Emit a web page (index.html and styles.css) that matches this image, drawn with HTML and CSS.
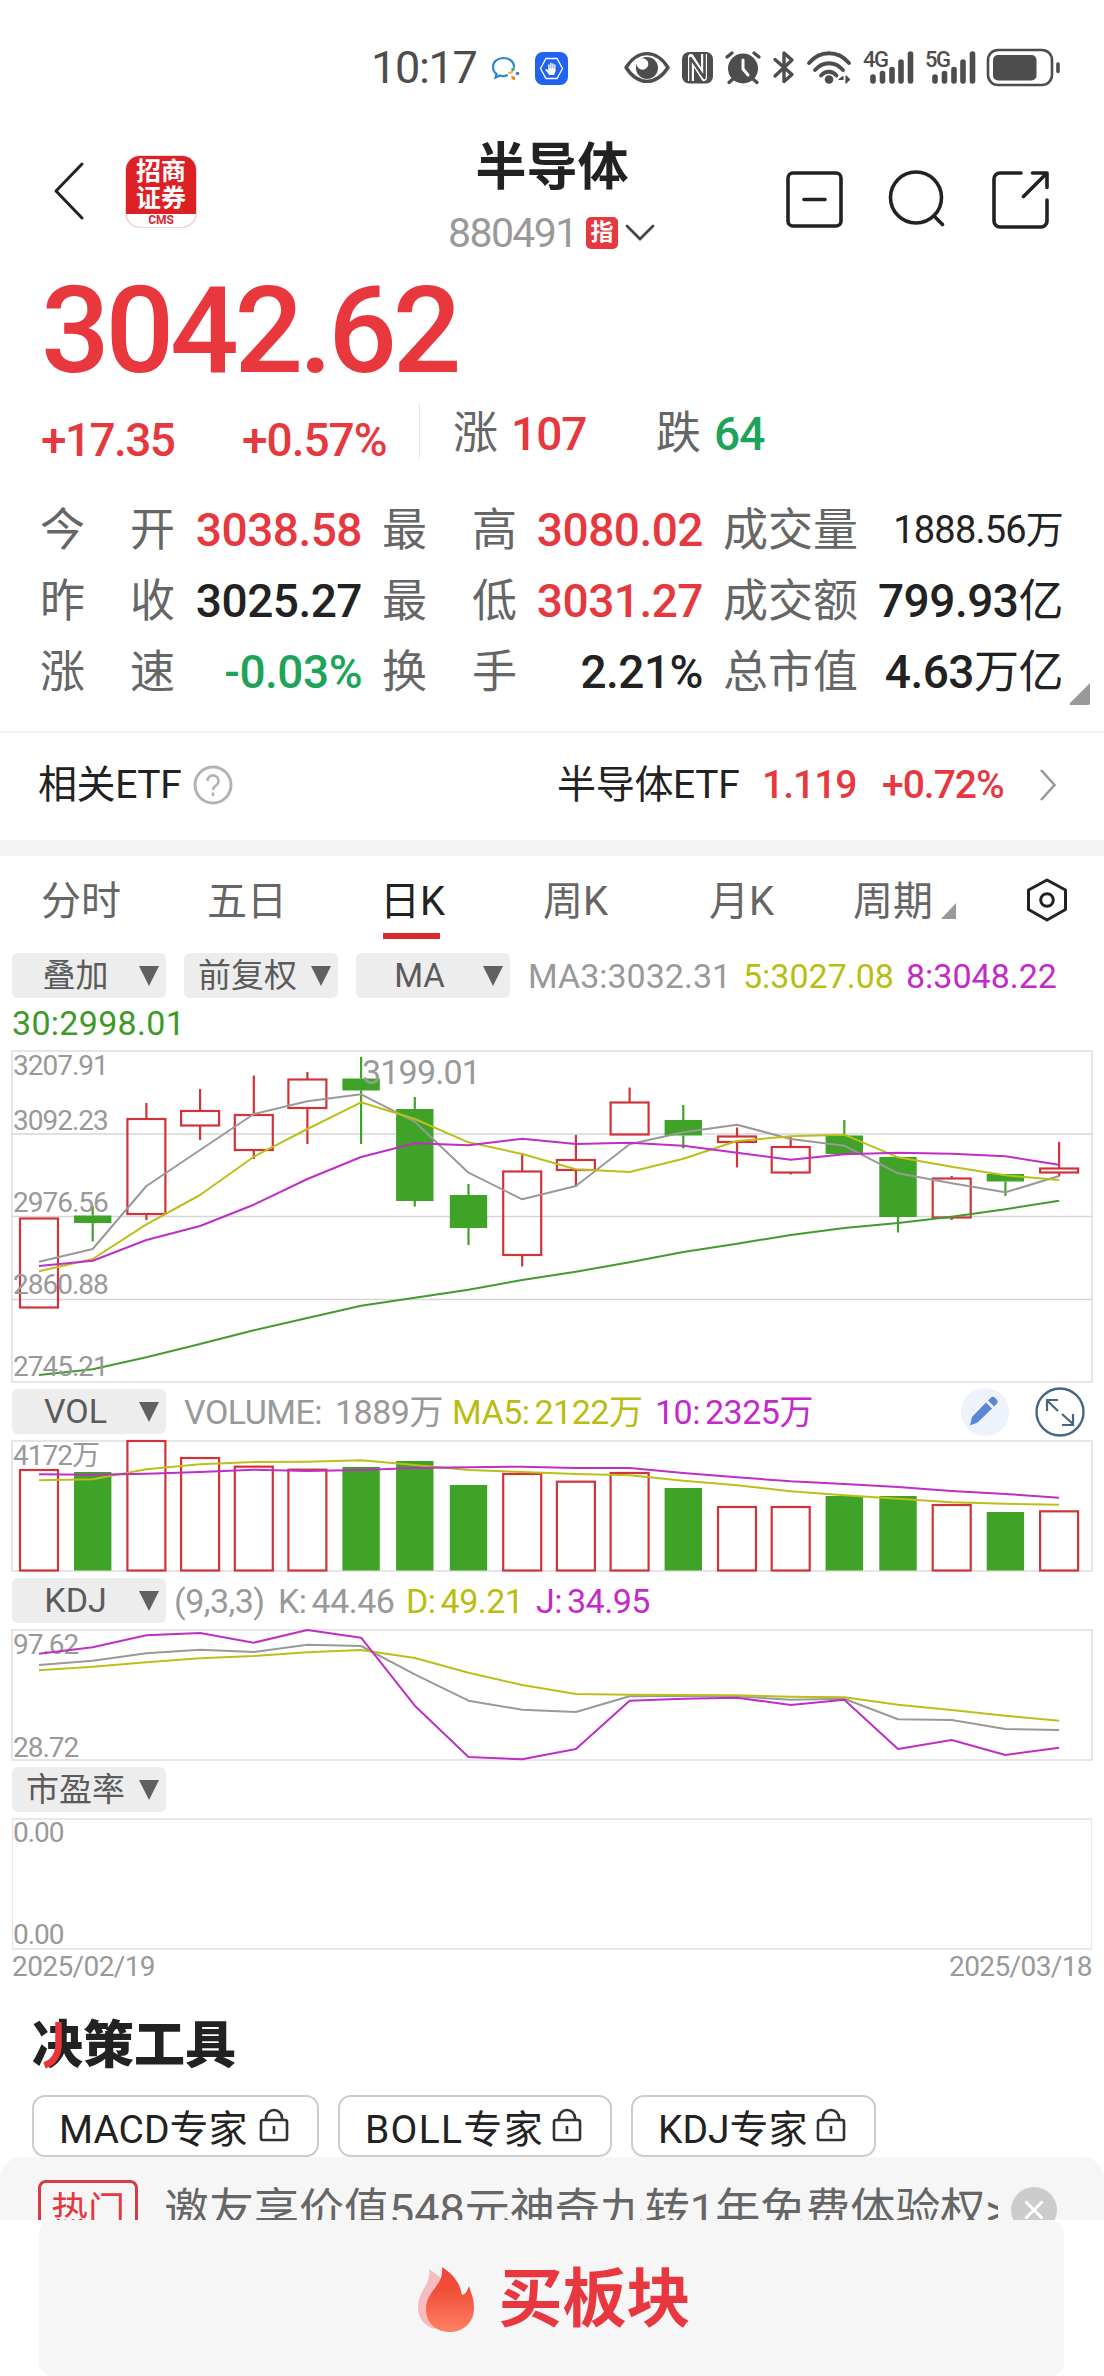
FILE: index.html
```html
<!DOCTYPE html>
<html lang="zh-CN">
<head>
<meta charset="utf-8">
<title>半导体 880491</title>
<link rel="stylesheet" href="styles.css">
</head>
<body>
<div class="status">
  <span class="clock">10:17</span>
  <svg class="st-chat" width="30" height="26" viewBox="0 0 30 26" fill="none" stroke-width="2.2" stroke-linecap="round">
    <path d="M23 11C23 5.500 18 2 12.500 2S2 5.500 2 11c0 3 1.500 5.500 3.500 7L4.500 21.500 9 19.500c2 .7 5 .7 7-.2" stroke="#2a86c8"/>
    <path d="M18 17l3 -1M21 21l2 2" stroke="#f0b040"/><circle cx="22" cy="13.500" r="1.800" fill="#3fae5a"/><circle cx="26.500" cy="17.500" r="1.800" fill="#3a7fd0"/><circle cx="22.500" cy="22" r="1.700" fill="#ee7a30"/>
  </svg>
  <svg class="st-app" width="33" height="33" viewBox="0 0 33 33">
    <rect width="33" height="33" rx="8" fill="#2163ee"/>
    <path d="M11 6.500h11l5.500 10-5.500 10H11l-5.500-10z" fill="none" stroke="#fff" stroke-width="1.300"/>
    <path d="M13.200 12.500v6l-2-1.700-.9.900 3.800 5.300h5l1.400-3.500v-7h-1.300v4h-.6v-5h-1.400v5h-.6v-5.700h-1.400v5.700h-.6v-4z" fill="#fff"/>
  </svg>
  <svg class="st-icons" width="440" height="40" viewBox="620 48 440 40" fill="none" stroke="#4d4d4d" stroke-width="3.400" stroke-linecap="round" stroke-linejoin="round">
    <path d="M626 67.500C638 49 656 49 668 67.500 656 86 638 86 626 67.500z"/>
    <circle cx="647" cy="68" r="11" fill="#4d4d4d" stroke="none"/><circle cx="642.500" cy="64" r="5.800" fill="#fff" stroke="none"/>
    <rect x="682" y="52" width="31" height="31.500" rx="7" fill="#4d4d4d" stroke="none"/>
    <path d="M691 81V57l13 21V54" stroke="#fff" stroke-width="6" stroke-linecap="butt"/>
    <path d="M690.500 82V58l14 20V54" stroke-width="2.600" stroke-linecap="butt"/>
    <circle cx="743" cy="68.500" r="15" fill="#4d4d4d" stroke="none"/><path d="M743 60v9l5 6" stroke="#fff" stroke-width="3"/><path d="M727 57l5-4M759 57l-5-4M733 79l-4 3.500M753 79l4 3.500"/>
    <path d="M775 59.500l17 15-8 7V53l8 7-17 16" stroke-width="3.400"/>
    <path d="M809 63c11-13 29-13 40 0M815 70c8-9 20-9 28 0M821 75.500c4.500-5 11-5 15.500 0" stroke-width="3.800"/><circle cx="829" cy="79.500" r="4.300" fill="#4d4d4d" stroke="none"/><path d="M839 79.500h4v-3zM846 76v7l3.500-3.500z" stroke-width="1.200" fill="#4d4d4d"/>
    <path d="M873 77v4M882.500 73.500V81M892 69.500V81M901 62V81M910.500 54V81M935 77v4M944.500 73.500V81M954 69.500V81M963 62V81M972.500 54V81" stroke-width="5.600"/>
    <rect x="988" y="50" width="64" height="35" rx="10" stroke-width="2.600"/><rect x="993" y="55" width="43.500" height="25.500" rx="5" fill="#4d4d4d" stroke="none"/><path d="M1058 64v7.500" stroke-width="3.600"/>
    <text class="st-net" x="863" y="67">4G</text><text class="st-net" x="925" y="67">5G</text>
  </svg>
</div>

<header class="head">
  <svg class="back" width="34" height="62" viewBox="0 0 34 62" fill="none" stroke="#222" stroke-width="3" stroke-linecap="round" stroke-linejoin="round"><path d="M29 4L3 31l26 27"/></svg>
  <div class="logo"><div class="logo-main">招商<br>证券</div><div class="logo-sub">CMS</div></div>
  <div class="title">
    <h1>半导体</h1>
    <div class="code"><span>880491</span><b>指</b><svg width="32" height="20" viewBox="0 0 32 20" fill="none" stroke="#444" stroke-width="2.800" stroke-linecap="round"><path d="M3 3l13 13L29 3"/></svg></div>
  </div>
  <svg class="acts" width="270" height="64" viewBox="782 168 270 64" fill="none" stroke="#222" stroke-width="3.600" stroke-linecap="round" stroke-linejoin="round">
    <rect x="788" y="173" width="53" height="53" rx="5"/><path d="M804 199.500h21"/>
    <circle cx="916" cy="197.500" r="25.500"/><path d="M935 217l7.500 7.500"/>
    <path d="M1021 173h-21a6 6 0 0 0-6 6v42a6 6 0 0 0 6 6h41a6 6 0 0 0 6-6v-21M1032.500 173H1047v14.500M1046 174l-22.500 22.500"/>
  </svg>
</header>

<section class="quote">
  <div class="price">3042.62</div>
  <div class="chg">
    <span class="up c1">+17.35</span><span class="up c2">+0.57%</span><i></i>
    <div class="cnt"><span>涨</span><b class="up">107</b><span class="fall">跌</span><b class="down">64</b></div>
  </div>
  <div class="stats">
    <span class="k"><i>今</i><i>开</i></span><span class="v up">3038.58</span><span class="k"><i>最</i><i>高</i></span><span class="v up">3080.02</span><span class="k">成交量</span><span class="v small">1888.56万</span>
    <span class="k"><i>昨</i><i>收</i></span><span class="v">3025.27</span><span class="k"><i>最</i><i>低</i></span><span class="v up">3031.27</span><span class="k">成交额</span><span class="v">799.93<i>亿</i></span>
    <span class="k"><i>涨</i><i>速</i></span><span class="v down">-0.03%</span><span class="k"><i>换</i><i>手</i></span><span class="v">2.21%</span><span class="k">总市值</span><span class="v">4.63<i>万亿</i></span>
  </div>
  <svg class="corner" width="22" height="23" viewBox="0 0 22 23"><path d="M21 0v20q0 2-2 2H2q-2 0-1-2z" fill="#999"/></svg>
</section>

<section class="etf">
  <span>相关ETF</span>
  <svg width="40" height="40" viewBox="0 0 40 40" fill="none" stroke="#b3b3b3" stroke-width="3"><circle cx="20" cy="20" r="18"/><path d="M14.500 16a5.500 5.500 0 1 1 8.500 4.500c-2 1.300-3 2-3 4.500M20 27.500v3.500" stroke-width="2.600"/></svg>
  <span class="etf-name">半导体ETF</span><b class="up e1">1.119</b><b class="up e2">+0.72%</b>
  <svg class="more" width="18" height="34" viewBox="0 0 18 34" fill="none" stroke="#999" stroke-width="2.600"><path d="M2 2l13.500 15L2 32"/></svg>
</section>

<nav class="tabs">
  <span>分时</span><span>五日</span><span class="on">日K</span><span>周K</span><span>月K</span><span>周期<svg width="15" height="16" viewBox="0 0 15 16"><path d="M15 0v16H0z" fill="#999"/></svg></span>
  <svg class="hex" width="44" height="46" viewBox="0 0 44 46" fill="none" stroke="#222" stroke-width="3" stroke-linejoin="round"><path d="M22 3l18.500 10v19.500L22 43 3.500 32.500V13z"/><circle cx="22" cy="23" r="6.300"/></svg>
</nav>

<section class="charts">
  <div class="row first">
    <div class="chip"><span>叠加</span></div><div class="chip"><span>前复权</span></div><div class="chip"><span>MA</span></div>
    <span class="gray w216">MA3:3032.31</span><span class="yel w162">5:3027.08</span><span class="mag">8:3048.22</span>
  </div>
  <div class="ma30">30:2998.01</div>
  <svg class="plot" id="kline" width="1104" height="336" viewBox="0 1048 1104 336">
    <path class="frame" d="M12 1051h1080v331H12z"/>
    <path class="grid" d="M12 1134h1080M12 1216.500h1080M12 1299.500h1080"/>
    <g class="marks"></g>
    <text x="13" y="1075">3207.91</text><text x="13" y="1130">3092.23</text><text x="13" y="1212">2976.56</text><text x="13" y="1294">2860.88</text><text x="13" y="1376">2745.21</text>
    <text class="peak" x="362" y="1084">3199.01</text>
  </svg>
  <div class="row vol">
    <div class="chip"><span>VOL</span></div>
    <span class="gray w151">VOLUME:</span><span class="gray w117">1889万</span><span class="yel w203">MA5:<em></em>2122万</span><span class="mag">10:<em></em>2325万</span>
    <svg class="tools" width="128" height="50" viewBox="958 1386 128 50" fill="none">
      <circle cx="985" cy="1411" r="24" fill="#eef2fb"/>
      <path d="M972 1416l14-14.500 6 6-14.500 14-7.500 3zM988 1399.500l3-3q2-1.500 4 .3l2 2q1.500 2 0 3.700l-3 3z" fill="#5b86d2"/>
      <circle cx="1060" cy="1411" r="23.500" stroke="#4a6580" stroke-width="2.400"/>
      <path d="M1058 1410l-11-10.500M1047 1410v-11h11M1062 1413l11 10M1073 1413v11h-11" stroke="#4a6580" stroke-width="2.200"/>
    </svg>
  </div>
  <svg class="plot" id="volume" width="1104" height="134" viewBox="0 1439 1104 134">
    <path class="frame" d="M12 1441h1080v130H12z"/>
    <g class="marks"></g>
    <text x="13" y="1465">4172万</text>
  </svg>
  <div class="row kdj">
    <div class="chip"><span>KDJ</span></div>
    <span class="gray w106">(9,3,3)</span><span class="gray w127">K:<em></em>44.46</span><span class="yel w129">D:<em></em>49.21</span><span class="mag">J:<em></em>34.95</span>
  </div>
  <svg class="plot" id="kdj" width="1104" height="134" viewBox="0 1628 1104 134">
    <path class="frame" d="M12 1630h1080v130H12z"/>
    <text x="13" y="1654">97.62</text><text x="13" y="1757">28.72</text>
    <g class="marks"></g>
  </svg>
  <div class="row pe"><div class="chip"><span>市盈率</span></div></div>
  <div class="empty"><span>0.00</span><span>0.00</span></div>
  <div class="dates"><span>2025/02/19</span><span>2025/03/18</span></div>
</section>

<section class="tools-sec">
  <h2>决策工具<svg width="34" height="52" viewBox="0 0 34 52" fill="none" stroke="#e8353c" stroke-width="6.500"><path d="M26.500 2v24q-1 15-14 19.500"/></svg></h2>
  <div class="experts">
    <div class="macd">MACD专家<svg class="lock" width="30" height="34" viewBox="0 0 30 34"><use href="#lock"/></svg></div>
    <div class="boll">BOLL专家<svg class="lock" width="30" height="34" viewBox="0 0 30 34"><use href="#lock"/></svg></div>
    <div class="kdjx">KDJ专家<svg class="lock" width="30" height="34" viewBox="0 0 30 34"><use href="#lock"/></svg></div>
  </div>
</section>
<svg width="0" height="0" class="defs"><defs><g id="lock" fill="none" stroke="#333" stroke-width="2.600"><rect x="2" y="12" width="26" height="20" rx="2"/><path d="M7 12v-2a8 8 0 0 1 16 0v2M15 18v8"/></g></defs></svg>

<div class="banner">
  <span class="hot">热门</span>
  <p>邀友享价值548元神奇九转1年免费体验权&gt;&gt;</p>
  <svg width="46" height="46" viewBox="0 0 46 46"><circle cx="23" cy="23" r="23" fill="#ccc"/><path d="M14.500 14.500l17 17M31.500 14.500l-17 17" stroke="#fff" stroke-width="3"/></svg>
</div>
<footer class="buy">
  <svg width="58" height="68" viewBox="0 0 58 68">
    <defs><linearGradient id="fire" x1="0" y1="0" x2="0" y2="1"><stop offset="0" stop-color="#f0443a"/><stop offset=".35" stop-color="#f04e38"/><stop offset="1" stop-color="#ff8266"/></linearGradient></defs>
    <path d="M12 3c3 14-11 22-11 38 0 11 6 19 17 22L34 20C28 16 20 8 12 3z" fill="#f7bcc0"/>
    <path d="M25 1c2 20-16 23-16 42 0 14 10 23 24 23s24-10 24-24c0-10-3-15-5-22-2 5-3 8-7 9C43 17 36 8 25 1z" fill="url(#fire)"/>
  </svg>
  <b>买板块</b>
</footer>
<script src="chart.js"></script>
</body>
</html>
```
FILE: styles.css
```css
* { box-sizing: border-box; }
body { margin: 0; width: 1104px; height: 2376px; overflow: hidden; background: #fff; color: #222; font-family: Roboto, "Noto Sans CJK SC", sans-serif; }
h1, h2, p { margin: 0; }
i { font-style: normal; }
svg { display: block; flex: none; }
.defs { position: absolute; }
.up { color: #e5383f; }
.down { color: #1ea35b; }
.gray { color: #999; }
.yel { color: #b9bd12; }
.mag { color: #c429c9; }

.status { height: 136px; display: flex; align-items: center; padding-left: 371px; color: #4d4d4d; }
.clock { font-size: 45px; line-height: 50px; width: 120px; letter-spacing: -1.300px; white-space: nowrap; }
.st-chat { margin-top: 2px; }
.st-app { margin-left: 14px; }
.st-icons { margin-left: 52px; }
.st-net { font: 500 22px Roboto, sans-serif; fill: #4d4d4d; stroke: none; letter-spacing: -1.500px; }

.head { height: 133px; display: flex; align-items: flex-start; padding-left: 53px; }
.back { margin-top: 24px; }
.logo { margin: 20px 0 0 39px; width: 70px; height: 71px; border-radius: 14px; overflow: hidden; background: #dc2024; box-shadow: 0 0 0 1px #ead9d9; flex: none; }
.logo-main { height: 58px; padding-top: 2px; color: #fff; font-weight: 700; font-size: 25px; line-height: 27px; text-align: center; }
.logo-sub { height: 13px; background: #fff; color: #d9262c; font-size: 12px; line-height: 12px; font-weight: 700; text-align: center; }
.title { margin-left: 226px; width: 260px; display: flex; flex-direction: column; align-items: center; }
h1 { font-size: 51px; line-height: 60px; font-weight: 700; margin-top: 2px; }
.code { display: flex; align-items: center; height: 50px; margin-top: 10px; }
.code span { font-size: 41px; letter-spacing: -1.600px; color: #999; width: 138px; }
.code b { width: 32px; height: 32px; border-radius: 5px; background: #e5383f; color: #fff; font-size: 23px; line-height: 32px; text-align: center; }
.code svg { margin-left: 6px; }
.acts { margin: 32px 0 0 100px; }

.quote { height: 462px; position: relative; }
.price { padding-left: 41px; height: 122px; font-size: 121px; line-height: 124px; letter-spacing: -4.300px; color: #e9373e; font-weight: 500; }
.chg { display: flex; height: 74px; margin-top: 6px; font-size: 46px; line-height: 87px; font-weight: 500; }
.chg .c1 { margin-left: 41px; width: 201px; letter-spacing: -1.600px; }
.chg .c2 { width: 177px; letter-spacing: -1px; }
.chg > i { width: 1px; height: 56px; margin-top: 6px; background: #e6e6e6; }
.cnt { display: flex; line-height: 74px; margin-left: 33px; }
.cnt span { font-size: 45px; color: #666; font-weight: 400; width: 58px; }
.cnt .fall { margin-left: 74px; }
.cnt b { width: 71px; font-weight: 500; letter-spacing: -1px; }
.stats { display: grid; grid-template-columns: 135px 207px 135px 206px 135px 206px; grid-auto-rows: 71px; margin: 24px 0 0 40px; line-height: 71px; font-size: 46px; }
.k { display: flex; justify-content: space-between; font-size: 45px; color: #666; white-space: nowrap; }
.v { text-align: right; padding-right: 1px; font-weight: 500; white-space: nowrap; letter-spacing: -.5px; }
.v i { font-weight: 400; font-size: 45px; }
.stats .v:nth-child(6n+2), .stats .v:nth-child(6n+4) { padding-right: 20px; }
.v.small { font-size: 38px; letter-spacing: -.800px; font-weight: 400; }
.corner { position: absolute; left: 1069px; top: 414px; }

.etf { height: 109px; border-top: 2px solid #f2f2f2; display: flex; align-items: center; padding: 0 0 3px 38px; font-size: 39px; line-height: 60px; }
.etf > svg { margin-left: 9px; }
.etf > span:first-child { width: 146px; letter-spacing: -.400px; }
.etf-name { margin-left: 324px; width: 205px; white-space: nowrap; letter-spacing: -.300px; }
.etf b { font-weight: 500; letter-spacing: -1px; }
.e1 { width: 120px; }
.e2 { width: 157px; }
.etf > .more { margin-left: 0; }

.tabs { border-top: 16px solid #f4f4f4; height: 113px; display: flex; position: relative; font-size: 40px; line-height: 91px; color: #666; padding-left: 41px; }
.tabs span { width: 166px; display: flex; position: relative; }
.tabs span:nth-child(2) { width: 173px; }
.tabs .on { color: #222; width: 163px; }
.tabs span:nth-child(5) { width: 144px; }
.tabs .on::after { content: ""; position: absolute; left: 3px; top: 77px; width: 57px; height: 6px; background: #da2a2c; }
.tabs span svg { margin: 47px 0 0 8px; }
.tabs span:nth-child(6) { width: 172px; }
.hex { margin-top: 21px; }

.row { display: flex; align-items: center; padding-left: 12px; height: 45px; font-size: 34px; line-height: 45px; white-space: nowrap; }
.row > span { padding-top: 2px; }
.chip { width: 154px; height: 45px; flex: none; margin-right: 18px; background: #ededed; border-radius: 6px; color: #5b5b5b; font-size: 33px; display: flex; align-items: center; }
.chip span { width: 127px; text-align: center; }
.chip::after { content: ""; border: 10px solid transparent; border-top: 20px solid #606060; border-bottom: 0; }
.w216 { width: 215px; } .w162 { width: 163px; } .w151 { width: 151px; } .w117 { width: 117px; }
.w203 { width: 203px; } .w106 { width: 104px; } .w127 { width: 128px; } .w129 { width: 130px; }
em { display: inline-block; width: 5px; }
.vol, .kdj { letter-spacing: -.500px; }
.vol .chip, .kdj .chip { letter-spacing: 0; font-size: 34px; }
.vol { margin: 5px 0; }
.tools { margin: 0 18px 0 auto; }
.kdj { margin: 5px 0; }
.kdj .chip { margin-right: 8px; }
.pe { margin-top: 5px; }
.ma30 { height: 50px; padding-left: 12px; font-size: 34px; line-height: 51px; letter-spacing: .300px; color: #3c9a28; }
.plot text { font: 28px Roboto, "Noto Sans CJK SC", sans-serif; fill: #999; letter-spacing: -1px; }
.plot .peak { font-size: 34px; letter-spacing: -.800px; }
.frame { fill: none; stroke: #e6e6e6; stroke-width: 2; }
.grid { stroke: #d6d6d6; stroke-width: 1.500; }
.rise { fill: none; stroke: #d0343b; stroke-width: 2.200; }
.drop { fill: #3ea326; stroke: none; }
.wick-drop { stroke: #3ea326; stroke-width: 2.200; }
.line { fill: none; stroke-width: 2; stroke-linejoin: round; }
.empty { margin: 6px 12px 0; height: 132px; border: 2px solid #e8e8e8; border-width: 2px 1px; display: flex; flex-direction: column; justify-content: space-between; font-size: 28px; line-height: 26px; color: #999; letter-spacing: -1px; }
.dates { margin: 0 12px; height: 32px; display: flex; justify-content: space-between; font-size: 28px; line-height: 33px; color: #999; letter-spacing: -.600px; }

.tools-sec { height: 175px; padding-left: 32px; }
h2 { font-size: 51px; line-height: 60px; font-weight: 900; padding-top: 34px; height: 113px; position: relative; }
h2 svg { position: absolute; left: 0; top: 38px; }
.experts { display: flex; gap: 19px; }
.experts div { height: 62px; border: 2px solid #ccc; border-radius: 13px; display: flex; align-items: center; justify-content: space-between; padding: 0 28px 0 25px; font-size: 39px; white-space: nowrap; }
.experts .macd { width: 287px; }
.experts .boll { width: 274px; letter-spacing: 1.300px; }
.experts .kdjx { width: 245px; }
.lock { margin-top: -3px; }
.banner { height: 63px; overflow: hidden; background: #f6f6f6; border-radius: 22px 22px 0 0; display: flex; align-items: flex-start; padding-left: 38px; }
.hot { margin-top: 23px; width: 100px; height: 60px; border: 3px solid #d63c45; border-radius: 8px; color: #e5383f; font-size: 37px; line-height: 57px; text-align: center; flex: none; }
.banner p { margin: 23px 0 0 26px; width: 834px; font-size: 45px; line-height: 62px; color: #666; white-space: nowrap; overflow: hidden; flex: none; }
.banner svg { margin: 30px 0 0 13px; }
.buy { margin: 0 40px 0 39px; height: 156px; padding: 4px 0 0 4px; background: #f6f6f6; border-radius: 14px; display: flex; align-items: center; justify-content: center; gap: 24px; color: #e8373e; font-size: 64px; line-height: 80px; }
```
FILE: chart.js
```js
const STEP = 53.69, X0 = 39;
const x = i => X0 + STEP * i;

// [rising, body top, body bottom, high, low], in pixels below y = 1040
const candles = [
  [1,178.5,267.5,178.5,267.5],[0,175.5,183,166,201.5],[1,79,174,63,180],[1,71,85.5,49,100],[1,75,110,35.5,119],
  [1,39.5,68,32,104],[0,38.5,50.5,17,104],[0,69,161,57,166.5],[0,155,188,144,205],[1,131.5,215,113,226.5],
  [1,120,130,95,146.5],[1,62.5,94.5,47.5,94.5],[0,80,95.5,65,108.5],[1,96.5,102,87.5,127.5],[1,107,132.5,96,134.5],
  [0,95.5,114,80,114],[0,117,177,117,192.5],[1,138.5,177.5,136,180],[0,134,141.5,134,156],[1,128.5,132.5,102,136.5]];
const ma = [
  ['#999999',[665,627,438,330,222,184,163,245,398,478,438,313,277,254,297,317,400,430,457,408]],
  ['#bcbf1a',[694,657,553,465,350,267,187,237,307,342,388,396,356,303,289,284,352,380,406,420]],
  ['#bf2fc6',[678,662,600,558,494,417,351,310,316,296,312,308,317,338,359,343,338,341,349,374]],
  ['#449a30',[1005,988,952,912,871,834,797,773,749,720,695,667,636,611,585,564,549,530,508,482]]];
const volTops = [270,276,183,234,260,269,261,243,315,282,305,279,324,381,381,348,348,375,396,394];
const volMa = [
  ['#bcbf1a',[301,298,268,253,246,245,241,255,270,276,282,286,302,316,334,346,356,367,371,374]],
  ['#bf2fc6',[283,284,281,276,269,273,270,264,262,260,264,264,279,292,304,312,321,333,342,353]]];
const kdj = [
  ['#999999',[855,842,820,809,816,794,798,883,962,989,996,949,948,949,959,956,1018,1020,1047,1050]],
  ['#bcbf1a',[871,860,847,835,828,817,810,834,878,915,942,944,945,946,950,952,974,990,1007,1022]],
  ['#bf2fc6',[821,802,766,759,788,750,773,977,1131,1138,1107,962,956,953,975,959,1107,1080,1125,1103]]];

const line = (base) => ([color, vs]) =>
  `<polyline class="line" stroke="${color}" points="${vs.map((v, i) => x(i).toFixed(1) + ',' + (base + v / 3).toFixed(1)).join(' ')}"/>`;
const body = (rise, i, top, bottom) => rise
  ? `<rect class="rise" x="${(x(i) - 19).toFixed(1)}" y="${top}" width="38" height="${bottom - top}"/>`
  : `<rect class="drop" x="${(x(i) - 18.7).toFixed(1)}" y="${top}" width="37.4" height="${bottom - top}"/>`;
const fill = (id, html) => { document.querySelector('#' + id + ' .marks').innerHTML = html; };

fill('kline', candles.map(([r, t, b, h, l], i) => {
  const X = x(i).toFixed(1);
  return `<path class="${r ? 'rise' : 'wick-drop'}" d="M${X} ${1040 + h}V${1040 + t}M${X} ${1040 + b}V${1040 + l}"/>` + body(r, i, 1040 + t, 1040 + b);
}).join('') + ma.map(line(1040)).join(''));
fill('volume', volTops.map((v, i) => body(candles[i][0], i, 1380 + v / 3, 1570.5)).join('') + volMa.map(line(1380)).join(''));
fill('kdj', kdj.map(line(1380)).join(''));
```
